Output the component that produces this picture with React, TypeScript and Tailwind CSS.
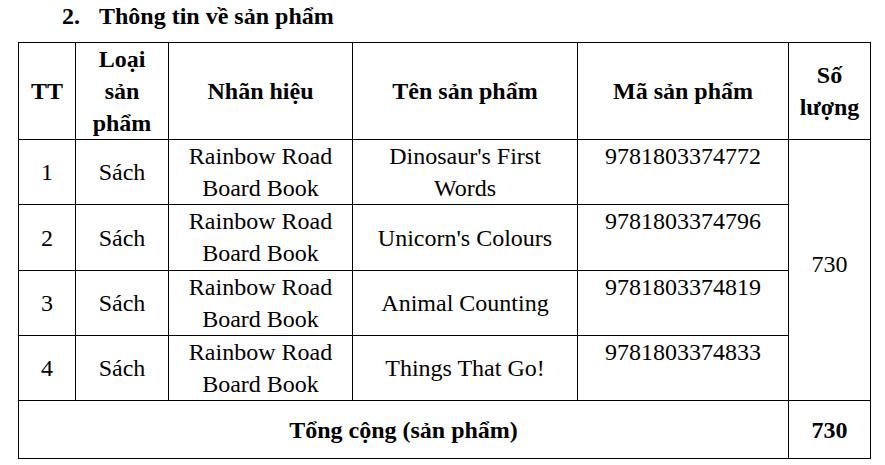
import React from "react";

const rows = [
  { tt: "1", name: ["Dinosaur's First", "Words"], code: "9781803374772" },
  { tt: "2", name: ["Unicorn's Colours"], code: "9781803374796" },
  { tt: "3", name: ["Animal Counting"], code: "9781803374819" },
  { tt: "4", name: ["Things That Go!"], code: "9781803374833" },
];

export default function App() {
  return (
    <div
      className="w-[885px] h-[465px] bg-white text-black overflow-hidden"
      style={{ fontFamily: '"Liberation Serif", "Times New Roman", serif' }}
    >
      <div className="pl-[62px] text-[24px] leading-[32px] font-bold flex">
        <span className="w-[37px]">2.</span>
        <span>Thông tin về sản phẩm</span>
      </div>
      <table className="ml-[18px] mt-[10px] table-fixed border-collapse text-[24px] leading-[32px] w-[852px]">
        <colgroup>
          <col className="w-[57px]" />
          <col className="w-[93px]" />
          <col className="w-[184px]" />
          <col className="w-[225px]" />
          <col className="w-[211px]" />
          <col className="w-[82px]" />
        </colgroup>
        <thead>
          <tr className="h-[97px] font-bold">
            <th className="border border-black p-0 align-middle">TT</th>
            <th className="border border-black p-0 align-middle">
              Loại
              <br />
              sản
              <br />
              phẩm
            </th>
            <th className="border border-black p-0 align-middle">Nhãn hiệu</th>
            <th className="border border-black p-0 align-middle">Tên sản phẩm</th>
            <th className="border border-black p-0 align-middle">Mã sản phẩm</th>
            <th className="border border-black p-0 align-middle">
              Số
              <br />
              lượng
            </th>
          </tr>
        </thead>
        <tbody>
          {rows.map((r, i) => (
            <tr key={r.tt} className={i === 0 ? "h-[64px]" : i === 1 ? "h-[66px]" : "h-[65px]"}>
              <td className="border border-black p-0 text-center align-middle">{r.tt}</td>
              <td className="border border-black p-0 text-center align-middle">Sách</td>
              <td className="border border-black p-0 text-center align-top">
                Rainbow Road
                <br />
                Board Book
              </td>
              <td className="border border-black p-0 text-center align-middle">
                {r.name.map((n, k) => (
                  <div key={k}>{n}</div>
                ))}
              </td>
              <td className="border border-black p-0 text-center align-top">{r.code}</td>
              {i === 0 && (
                <td rowSpan={4} className="border border-black p-0 pb-[12px] text-center align-middle">
                  730
                </td>
              )}
            </tr>
          ))}
          <tr className="h-[58px] font-bold">
            <td colSpan={5} className="border border-black p-0 text-center align-middle">
              Tổng cộng (sản phẩm)
            </td>
            <td className="border border-black p-0 text-center align-middle">730</td>
          </tr>
        </tbody>
      </table>
    </div>
  );
}
